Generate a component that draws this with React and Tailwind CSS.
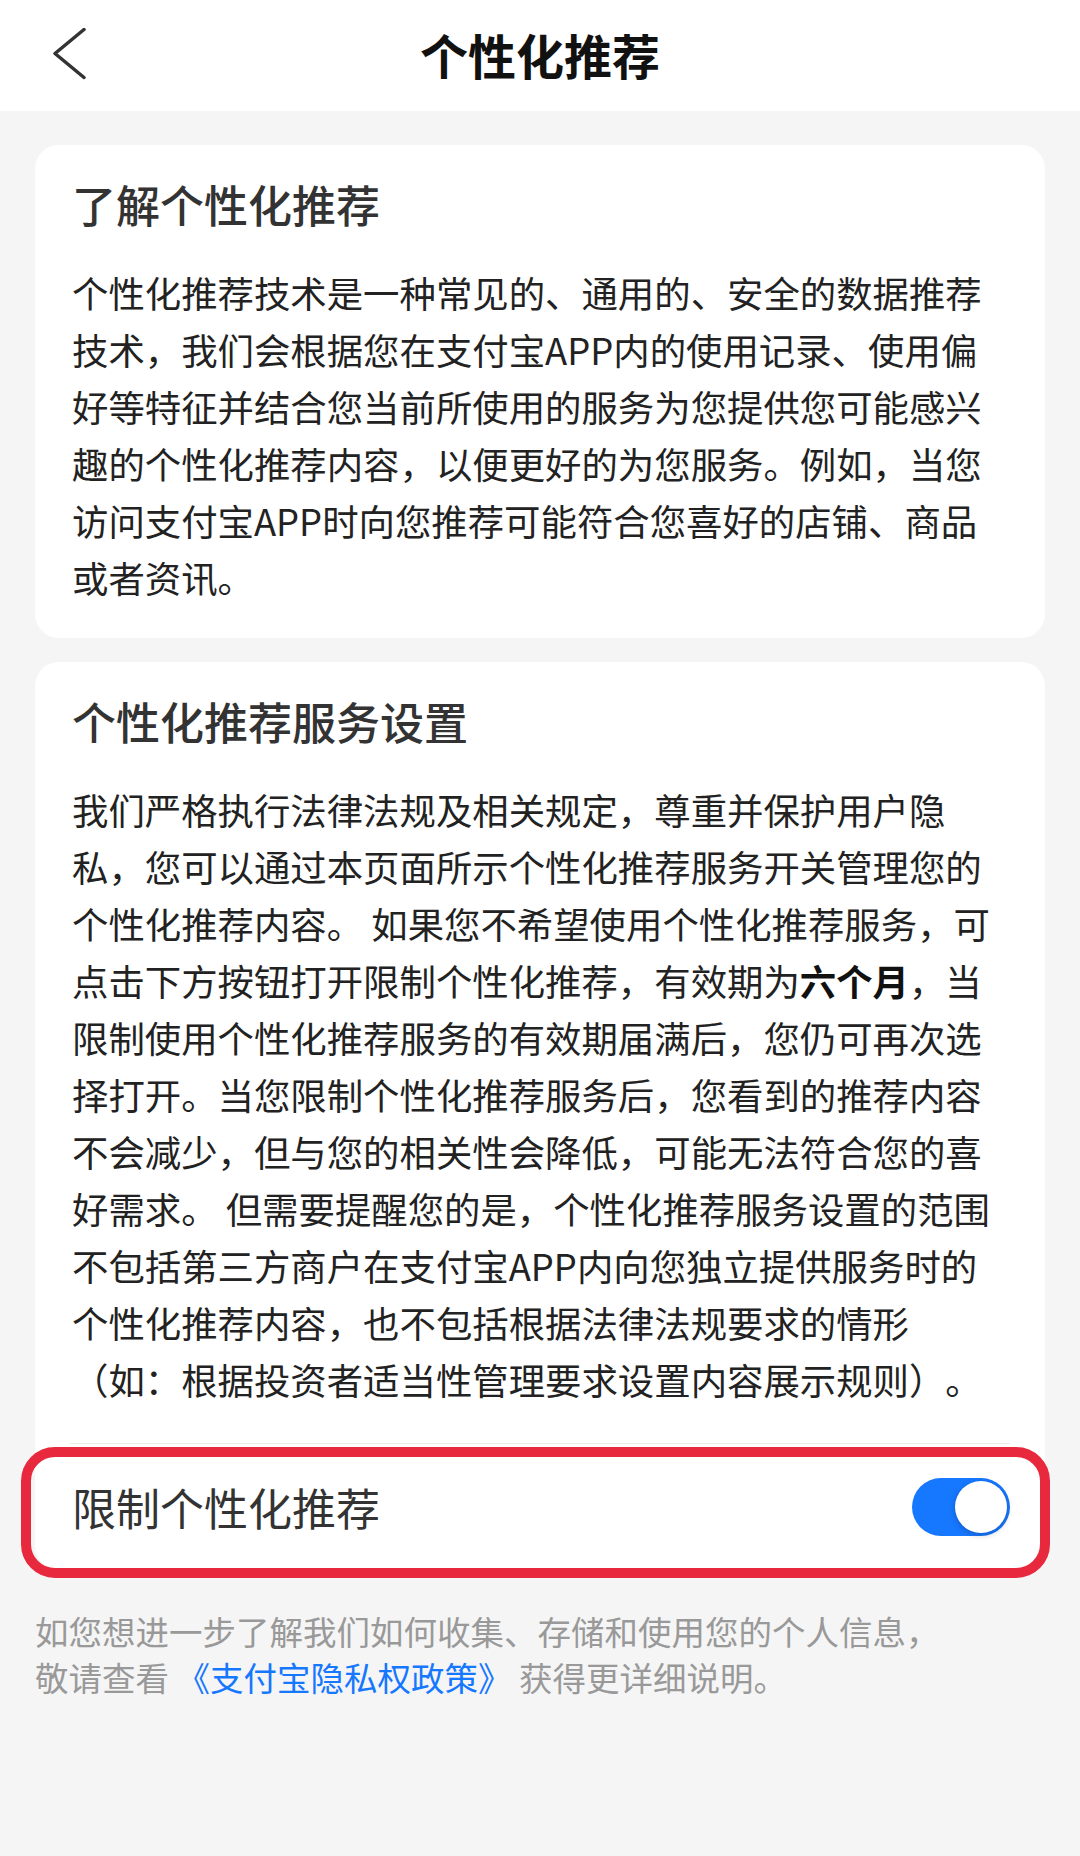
import React, { useState } from "react";

function BackIcon() {
  return (
    <svg width="36" height="56" viewBox="0 0 36 56" fill="none">
      <path
        d="M32 1.5 L3 25.5 L32 49.5"
        stroke="#333"
        strokeWidth="3.5"
        strokeLinecap="round"
        strokeLinejoin="round"
      />
    </svg>
  );
}

function Toggle({ on, onChange }) {
  return (
    <button
      role="switch"
      aria-checked={on}
      onClick={() => onChange(!on)}
      className={`w-[98px] h-[58px] rounded-full p-[3px] flex ${
        on ? "bg-[#1677ff] justify-end" : "bg-[#e5e5e5] justify-start"
      }`}
    >
      <span className="w-[52px] h-[52px] rounded-full bg-white shadow-[0_2px_6px_rgba(0,0,0,0.22)]" />
    </button>
  );
}

export default function App() {
  const [limited, setLimited] = useState(true);

  return (
    <div className="min-h-screen bg-[#f5f5f5] font-[family-name:'Noto_Sans_CJK_SC','Noto_Sans',sans-serif] [text-spacing-trim:space-all]">
      {/* 顶部导航 */}
      <header className="h-[111px] bg-white grid grid-cols-[1fr_auto_1fr] items-center">
        <div className="pl-[52px] flex items-center">
          <BackIcon />
        </div>
        <h1 className="text-[48px] leading-none font-bold text-[#111] pb-[4px]">
          个性化推荐
        </h1>
        <div />
      </header>

      <main className="px-[35px] pt-[34px] pb-10">
        <div className="flex flex-col gap-[24px]">
          {/* 了解个性化推荐 */}
          <section className="bg-white rounded-[24px] pt-[37px] pb-[32px] pl-[37px] pr-[47px]">
            <h2 className="text-[44px] leading-none font-medium text-[#333]">
              了解个性化推荐
            </h2>
            <p className="mt-[38px] text-[36.4px] leading-[57px] text-[#222]">
              个性化推荐技术是一种常见的、通用的、安全的数据推荐技术，我们会根据您在支付宝APP内的使用记录、使用偏好等特征并结合您当前所使用的服务为您提供您可能感兴趣的个性化推荐内容，以便更好的为您服务。例如，当您访问支付宝APP时向您推荐可能符合您喜好的店铺、商品或者资讯。
            </p>
          </section>

          {/* 服务设置 */}
          <section className="bg-white rounded-[24px] pt-[37px]">
            <div className="pl-[37px] pr-[47px] pb-[35px]">
              <h2 className="text-[44px] leading-none font-medium text-[#333]">
                个性化推荐服务设置
              </h2>
              <p className="mt-[38px] text-[36.4px] leading-[57px] text-[#222]">
                我们严格执行法律法规及相关规定，尊重并保护用户隐私，您可以通过本页面所示个性化推荐服务开关管理您的个性化推荐内容。 如果您不希望使用个性化推荐服务，可点击下方按钮打开限制个性化推荐，有效期为
                <span className="font-bold text-[#111]">六个月</span>
                ，当限制使用个性化推荐服务的有效期届满后，您仍可再次选择打开。当您限制个性化推荐服务后，您看到的推荐内容不会减少，但与您的相关性会降低，可能无法符合您的喜好需求。 但需要提醒您的是，个性化推荐服务设置的范围不包括第三方商户在支付宝APP内向您独立提供服务时的个性化推荐内容，也不包括根据法律法规要求的情形（如：根据投资者适当性管理要求设置内容展示规则）。
              </p>
            </div>
            <div className="mx-[35px] h-px bg-[#e8e8e8]" />
            <div className="relative h-[126px] flex items-center justify-between pl-[37px] pr-[35px]">
              <span className="text-[44px] leading-none text-[#333]">限制个性化推荐</span>
              <Toggle on={limited} onChange={setLimited} />
              {/* 红色标注框 */}
              <div className="pointer-events-none absolute top-[3px] -bottom-[8px] -left-[14px] -right-[5px] border-[10px] border-[#e8283c] rounded-[34px]" />
            </div>
          </section>
        </div>

        <p className="mt-[38px] text-[33.5px] leading-[46px] text-[#999]">
          如您想进一步了解我们如何收集、存储和使用您的个人信息，
          <br />
          敬请查看 <span className="text-[#1677ff]">《支付宝隐私权政策》</span> 获得更详细说明。
        </p>
      </main>
    </div>
  );
}
